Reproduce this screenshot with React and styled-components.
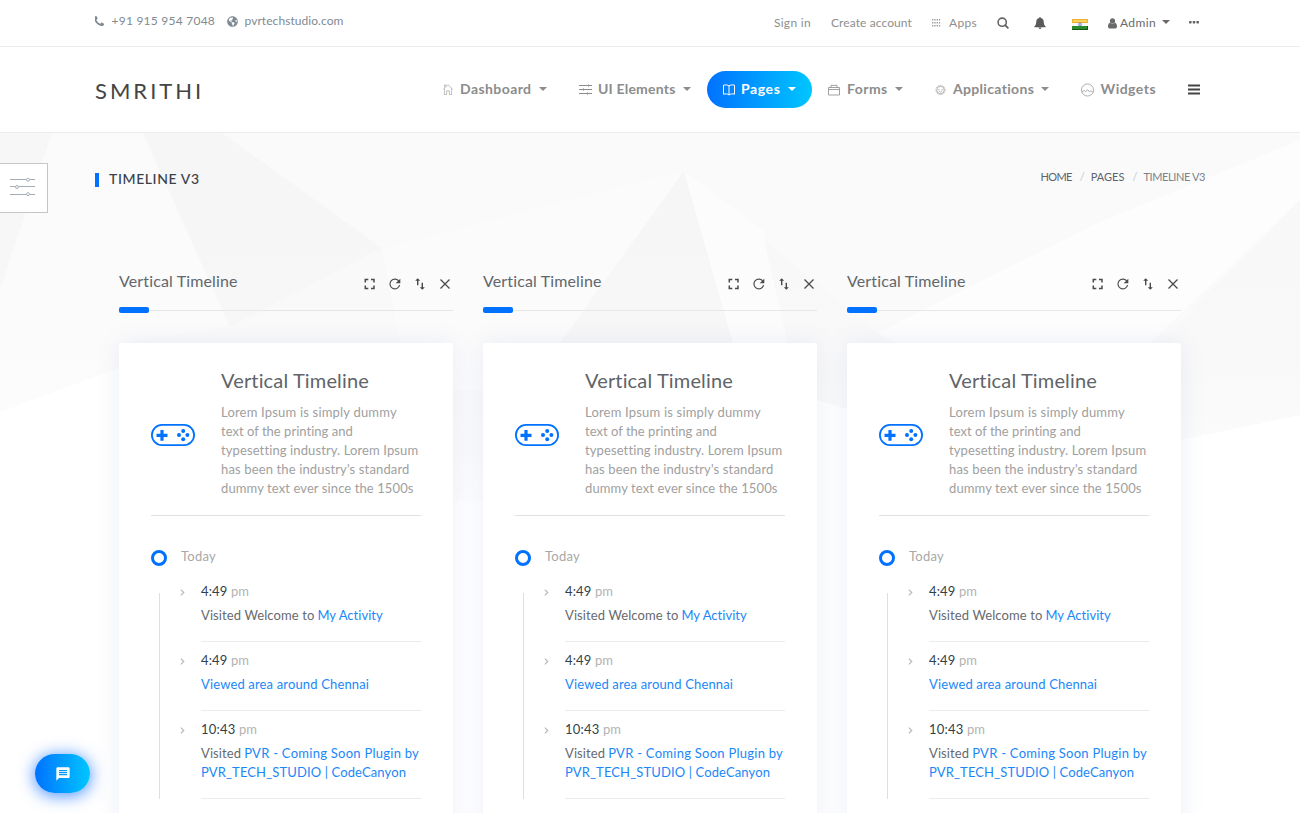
import React from 'react';
import styled, { createGlobalStyle } from 'styled-components';
import { FaGlobeAmericas } from 'react-icons/fa';
import { MdMessage } from 'react-icons/md';

const GlobalStyle = createGlobalStyle`
  * { box-sizing: border-box; }
  html, body { margin: 0; padding: 0; }
  body {
    height: 813px;
    overflow: hidden;
    background: #fff;
    color: #555;
    font-family: Lato, "Open Sans", sans-serif;
    font-size: 13px;
  }
  svg { display: block; flex: none; }
`;

const Page = styled.div`
  position: relative;
  height: 813px;
  overflow: hidden;
`;

const Container = styled.div`
  width: 1110px;
  height: 100%;
  margin: 0 auto;
  display: flex;
  justify-content: space-between;
`;

const Label = styled.span`
  padding-bottom: 2px;
  letter-spacing: ${(p) => p.$track || 0}px;
  white-space: nowrap;
`;

/* ---------- top bar ---------- */

const TopBar = styled.div`
  height: 47px;
  background: #fff;
  border-bottom: 1px solid #ececec;
  font-size: 12px;
`;

const Contacts = styled.div`
  display: flex;
  align-items: center;
  gap: 12px;
  height: 42px;
  color: #7f8a92;
`;

const Contact = styled.div`
  display: flex;
  align-items: center;
  gap: 6.5px;
`;

const TopLinks = styled.div`
  display: flex;
  align-items: center;
  gap: 20px;
  height: 46px;
  padding-right: 6px;
`;

const TopLink = styled.a`
  display: flex;
  align-items: center;
  gap: ${(p) => p.$gap || 0}px;
  color: ${(p) => (p.$strong ? '#6a6a6a' : '#8e8e8e')};
`;

const BellSlot = styled.span`
  display: flex;
  justify-content: center;
  width: 23px;
  color: #5a5a5a;
`;

const AccountCaret = styled.span`
  margin: -3px 0 0 3px;
`;

const MoreSlot = styled.span`
  margin: -2px 0 0 -1px;
`;

/* ---------- main navigation ---------- */

const NavBar = styled.div`
  height: 86px;
  background: #fff;
  border-bottom: 1px solid #ececec;
`;

const Brand = styled.div`
  display: flex;
  align-items: center;
  height: 87px;
  color: #444;
  font-size: 22px;
  letter-spacing: 3px;
`;

const Menu = styled.nav`
  display: flex;
  align-items: center;
  height: 85px;
  padding-right: 5px;
`;

const MenuItem = styled.a`
  display: flex;
  align-items: center;
  width: ${(p) => p.$width}px;
  height: 37px;
  padding: 0 16px;
  border-radius: 19px;
  font-size: 14px;
  font-weight: 700;
  color: ${(p) => (p.$active ? '#fff' : '#8c8c8c')};
  background: ${(p) => (p.$active ? 'linear-gradient(90deg, #0072ff, #00c6ff)' : 'none')};
`;

const MenuIcon = styled.span`
  width: ${(p) => p.$slot}px;
`;

const CaretSlot = styled.span`
  margin: -2px 0 0 auto;
`;

const MenuToggle = styled.span`
  padding-left: 16px;
  color: #444;
`;

/* ---------- page head ---------- */

const Backdrop = styled.svg`
  position: absolute;
  left: 0;
  top: 133px;
`;

const Content = styled.main`
  position: relative;
`;

const PageHead = styled.header`
  height: 92px;
`;

const Title = styled.h1`
  display: flex;
  align-items: center;
  gap: 10px;
  height: 93px;
  margin: 0;
  font-size: 14px;
  font-weight: 500;
  color: #3a4149;
  &::before {
    content: '';
    width: 4px;
    height: 14px;
    margin-top: 1px;
    background: #0072ff;
  }
`;

const Breadcrumb = styled.div`
  display: flex;
  align-items: center;
  gap: 8px;
  height: 89px;
  font-size: 11px;
  color: #5a6470;
`;

const Slash = styled.span`
  width: 3px;
  padding-bottom: 2px;
  color: #c4c9cf;
`;

const Current = styled.span`
  padding-bottom: 2px;
  color: #7b8389;
`;

/* ---------- widgets ---------- */

const Columns = styled.div`
  display: grid;
  grid-template-columns: repeat(3, 334px);
  gap: 30px;
  width: 1062px;
  margin: 40px auto 0;
`;

const WidgetHead = styled.div`
  display: flex;
  justify-content: space-between;
  height: 46px;
  border-bottom: 1px solid #e7e7e7;
`;

const WidgetTitle = styled.h2`
  margin: 0;
  font-size: 16px;
  font-weight: 400;
  line-height: 32px;
  color: #62676b;
`;

const Tools = styled.div`
  display: flex;
  align-items: center;
  gap: 9px;
  height: 38px;
  color: #4a4a4a;
`;

const Accent = styled.div`
  width: 30px;
  height: 6px;
  margin: -4px 0 30px;
  border-radius: 2px;
  background: #0072ff;
`;

const Card = styled.section`
  height: 520px;
  padding: 0 32px;
  border-radius: 3px;
  background: #fff;
  box-shadow: 0 0 25px rgba(90, 110, 200, 0.11);
`;

const Intro = styled.div`
  display: flex;
  align-items: center;
  gap: 26px;
  height: 173px;
  padding-top: 11px;
  border-bottom: 1px solid #e0e0e0;
`;

const IntroText = styled.div`
  height: 138px;
`;

const IntroTitle = styled.h3`
  margin: 0 0 9px;
  font-size: 20px;
  font-weight: 400;
  line-height: 28px;
  color: #606468;
`;

const Line = styled.div`
  line-height: 19px;
  color: #a0a0a0;
`;

const Day = styled.div`
  display: flex;
  align-items: center;
  gap: 14px;
  height: 57px;
  padding-top: 25px;
  color: #a8a8a8;
`;

const Ring = styled.span`
  width: 16px;
  height: 16px;
  margin-top: 2px;
  border: 3px solid #0072ff;
  border-radius: 50%;
`;

const Events = styled.div`
  position: relative;
  &::before {
    content: '';
    position: absolute;
    left: 8px;
    top: 20px;
    bottom: 0;
    width: 1px;
    background: #dedede;
  }
`;

const Event = styled.div`
  display: flex;
  gap: 15px;
  padding-left: 29px;
`;

const EventArrow = styled.span`
  padding-top: 16px;
  width: 6px;
`;

const EventBody = styled.div`
  width: 220px;
  padding: 8px 0 16px;
  border-bottom: 1px solid #ececec;
`;

const Time = styled.div`
  display: flex;
  gap: 3.5px;
  height: 20px;
  margin-bottom: 5px;
  line-height: 20px;
  color: #333f4d;
`;

const Period = styled.span`
  color: #b3b3b3;
`;

const EventLine = styled.div`
  display: flex;
  gap: 3px;
  height: 19px;
  line-height: 19px;
  color: #666a6e;
`;

const Link = styled.a`
  color: #1a87f8;
`;

/* ---------- floating controls ---------- */

const SettingsTab = styled.div`
  position: absolute;
  left: 0;
  top: 163px;
  display: flex;
  align-items: center;
  width: 48px;
  height: 50px;
  padding: 0 0 2px 10px;
  border: 1px solid #c6c6c6;
  border-left: 0;
  background: #fff;
`;

const ChatButton = styled.div`
  position: absolute;
  left: 35px;
  top: 754px;
  display: flex;
  align-items: center;
  justify-content: center;
  width: 55px;
  height: 39px;
  border-radius: 20px;
  color: #fff;
  background: linear-gradient(90deg, #0072ff, #00c6ff);
  box-shadow: 0 2px 16px 1px rgba(0, 102, 255, 0.68);
`;

/* ---------- icons ---------- */

const Caret = () => (
  <svg width="8" height="4" viewBox="0 0 8 4"><path d="M0 0h8L4 4z" fill="currentColor" /></svg>
);

const PhoneIcon = () => (
  <svg width="10" height="11" viewBox="128 128 1408 1536" fill="currentColor">
    <path d="M1408 1240q0 27-10 70.500t-21 68.500q-21 50-122 106-94 51-186 51-27 0-53-3.500t-57.500-12.500-47-14.500-55.500-20.500-49-18q-98-35-175-83-127-79-264-216t-216-264q-48-77-83-175-3-9-18-49t-20.500-55.500-14.500-47-12.500-57.500-3.500-53q0-92 51-186 56-101 106-122 25-11 68.500-21t70.500-10q14 0 21 3 18 6 53 76 11 19 30 54t35 63.500 31 53.500q3 4 17.500 25t21.500 35.500 7 28.500q0 20-28.500 50t-62 55-62 53-28.500 46q0 9 5 22.500t8.500 20.500 14 24 11.500 19q76 137 174 235t235 174q2 1 19 11.500t24 14 20.500 8.500 22.500 5q18 0 46-28.500t53-62 55-62 50-28.500q14 0 28.500 7t35.500 21.500 25 17.500q25 15 53.500 31t63.500 35 54 30q70 35 76 53 3 7 3 21z" />
  </svg>
);

const AppsIcon = () => (
  <svg width="9" height="9" viewBox="0 0 9 9" fill="#999">
    {[0, 2.300, 4.600, 6.900].map((x) => [0, 3, 6].map((y) => (
      <rect key={`${x}-${y}`} x={x} y={y} width="1.300" height="1.500" />
    )))}
  </svg>
);

const SearchIcon = () => (
  <svg width="12" height="12" viewBox="0 0 12 12" fill="none" stroke="#666" strokeWidth="1.600">
    <circle cx="5.200" cy="5.200" r="4.100" />
    <path d="M8.200 8.200l2.600 2.600" strokeWidth="1.900" strokeLinecap="round" />
  </svg>
);

const BellIcon = () => (
  <svg width="12" height="12" viewBox="0 0 12 12" fill="currentColor">
    <path d="M6 0c.5 0 .8.3.8.9 1.900.4 2.900 1.900 2.900 3.700 0 2.400.6 3.800 1.900 4.900v.7H.4v-.7c1.300-1.100 1.900-2.500 1.900-4.900C2.300 2.800 3.300 1.300 5.200.9 5.200.3 5.500 0 6 0z" />
    <path d="M4.500 10.600h3a1.500 1.400 0 0 1-3 0z" />
  </svg>
);

const FlagIcon = () => (
  <svg width="16" height="13" viewBox="0 -2 16 13">
    <rect width="16" height="11" fill="#f7f7f4" />
    <rect width="16" height="4" fill="#eeb02c" />
    <rect x="1" y="1" width="14" height="2" fill="#fad35c" />
    <rect y="7" width="16" height="4" fill="#2b8a2b" />
    <path d="M0 10.500h16M15.500 7v4" stroke="#11580f" />
    <circle cx="8" cy="5.300" r="1.500" fill="#b7c4ee" stroke="#6f86cf" strokeWidth=".8" />
  </svg>
);

const UserIcon = () => (
  <svg width="9" height="11" viewBox="0 0 9 11" fill="currentColor">
    <circle cx="4.500" cy="2.900" r="2.600" />
    <path d="M2 4.800C.5 5.300 0 6.800 0 8.600 0 9.800.7 10.500 1.700 10.500h5.600c1 0 1.700-.7 1.700-1.900 0-1.800-.5-3.300-2-3.800-1.400 1.300-3.600 1.300-5 0z" />
  </svg>
);

const DotsIcon = () => (
  <svg width="10" height="3" viewBox="0 0 10 3" fill="#666">
    <rect width="2.600" height="2.400" rx=".6" /><rect x="3.700" width="2.600" height="2.400" rx=".6" /><rect x="7.400" width="2.600" height="2.400" rx=".6" />
  </svg>
);

const thin = { fill: 'none', stroke: 'currentColor', strokeWidth: 0.8 };

const HomeIcon = () => (
  <svg width="10" height="11" viewBox="0 0 11 12" {...thin} strokeWidth=".6">
    <path d="M.4 5.500L5.500.8l5.100 4.700M1.500 4.700v6.800h2.500V7.500h3v4h2.500V4.700M1.800 3.800V1h1.400v1.500" />
  </svg>
);

const SlidersIcon = () => (
  <svg width="13" height="11" viewBox="0 0 13 11" {...thin} strokeWidth="1">
    <path d="M0 1.500h13M0 5.500h13M0 9.500h13" />
    <path d="M9.500 .3v2.400M4.500 4.300v2.400M8.500 8.300v2.400" strokeWidth=".8" />
  </svg>
);

const BookIcon = () => (
  <svg width="12" height="12" viewBox="0 0 12 12" {...thin} strokeWidth="1">
    <path d="M6 2C4.800.8 2.500.6.500 1.200v9c2-.6 4.300-.4 5.500.8 1.200-1.200 3.500-1.400 5.500-.8v-9C9.500.6 7.200.8 6 2zv9" />
  </svg>
);

const CaseIcon = () => (
  <svg width="12" height="12" viewBox="0 0 12 12" {...thin}>
    <path d="M.5 3.500h11v7.500H.5zM.5 5.500h11M3 3.500V1.400h6v2.100" />
  </svg>
);

const GearIcon = () => (
  <svg width="11" height="12" viewBox="0 0 12 12" {...thin}>
    <circle cx="6" cy="6" r="5" strokeWidth="1" strokeDasharray="1.500 1" opacity=".65" />
    <circle cx="6" cy="6" r="4.100" strokeWidth=".7" />
    <path d="M3.300 5.800h1.700M7 5.800h1.700M4.600 7.500c.9.700 1.900.7 2.800 0" strokeWidth=".7" />
  </svg>
);

const WaveIcon = () => (
  <svg width="13" height="14" viewBox="0 0 14 14" {...thin} strokeWidth=".75">
    <circle cx="7" cy="7" r="6.500" />
    <path d="M1 9.300l2.300-1.800L5 8.800l2-2.300 2.300 2.600 1.300-1.200L13 9.300" />
  </svg>
);

const BarsIcon = () => (
  <svg width="12" height="11" viewBox="0 0 12 11"><path d="M0 1.500h12M0 5.500h12M0 9.500h12" stroke="currentColor" strokeWidth="2" /></svg>
);

const TuneIcon = () => (
  <svg width="25" height="18" viewBox="0 0 25 18" fill="none" stroke="#a3adb7" strokeWidth="1">
    <path d="M0 1.500h16M20 1.500h5M0 8.500h5M9 8.500h16M0 16.500h16M20 16.500h5" />
    <circle cx="18" cy="1.700" r="1.500" /><circle cx="7" cy="9" r="1.500" /><circle cx="18" cy="16.200" r="1.500" />
  </svg>
);

const FullscreenIcon = () => (
  <svg width="16" height="16" viewBox="0 0 16 16" fill="none" stroke="currentColor" strokeWidth="1.500">
    <path d="M3.300 6.500V3.500h3M9 3.500h3v3M12 9.500v3H9M6.300 12.500h-3v-3" />
  </svg>
);

const RefreshIcon = () => (
  <svg width="16" height="16" viewBox="0 0 16 16">
    <path d="M12 5.400A4.900 4.900 0 1 0 12.600 9.200" fill="none" stroke="currentColor" strokeWidth="1.200" />
    <path d="M13.300 2.700v4.600H8.700z" fill="currentColor" />
  </svg>
);

const SortIcon = () => (
  <svg width="16" height="16" viewBox="0 0 16 16">
    <path d="M5.700 9.200V3.500M10.300 6.800v5.700" fill="none" stroke="currentColor" strokeWidth="1.400" />
    <path d="M3.200 4.700L5.700 2.200l2.500 2.500zM7.800 11.300l2.500 2.500 2.500-2.500z" fill="currentColor" />
  </svg>
);

const CloseIcon = () => (
  <svg width="16" height="16" viewBox="0 0 16 16">
    <path d="M3.500 3.500l9 9M12.500 3.500l-9 9" stroke="currentColor" strokeWidth="1.300" />
  </svg>
);

const GamepadIcon = () => (
  <svg width="44" height="22" viewBox="0 0 44 22" fill="#0072ff">
    <rect x=".9" y=".9" width="42.200" height="20.200" rx="10.100" fill="none" stroke="#0072ff" strokeWidth="1.800" />
    <path d="M9.400 6h3.200v3.800h3.900v3.200h-3.900v3.800H9.400V13H5.500V9.800h3.900z" />
    <circle cx="32.200" cy="6.900" r="2" /><circle cx="32.200" cy="15.300" r="2" /><circle cx="28" cy="11.100" r="2" /><circle cx="36.400" cy="11.100" r="2" />
  </svg>
);

const ArrowIcon = () => (
  <svg width="6" height="7" viewBox="0 0 6 7"><path d="M.8 .7L3.800 3.500.8 6.300" fill="none" stroke="#b5b5b5" strokeWidth="1.100" /></svg>
);

const Facets = () => (
  <Backdrop width="1300" height="400" viewBox="0 133 1300 400">
    <defs>
      <linearGradient id="fade" x1="0" y1="0" x2="0" y2="1">
        <stop offset="0" stopColor="#fff" stopOpacity="0" />
        <stop offset=".55" stopColor="#fff" stopOpacity=".1" />
        <stop offset="1" stopColor="#fff" stopOpacity=".8" />
      </linearGradient>
    </defs>
    <path d="M0 133h1300v282L1181 440 817 500H450L453 360 0 412z" fill="#fafafa" />
    <path d="M0 133h52L0 290z" fill="#f7f7f7" />
    <path d="M52 133h91l87 194L0 412V290z" fill="#fbfbfb" />
    <path d="M143 133h79l160 115-152 79z" fill="#f6f6f6" />
    <path d="M382 248L684 171 560 343 453 470 400 343z" fill="#fbfbfb" />
    <path d="M382 248L400 343H119L230 327z" fill="#f9f9f9" />
    <path d="M684 171L733 343H560z" fill="#f6f6f6" />
    <path d="M684 171l80 60 24 112h-55z" fill="#fcfcfc" />
    <path d="M764 240l113 93 11 10v77H788v-77z" fill="#f8f8f8" />
    <path d="M1300 140L1100 222 877 333l20 10h253L1300 200z" fill="#fdfdfd" />
    <path d="M1300 200L1175 328l-25 22v97l150-32z" fill="#f8f8f8" />
    <path d="M453 390h30v80l-30 34z" fill="#f8f8f8" />
    <path d="M0 412L119 368v165H0zM1300 415l-119 25v93h119zM817 400l30 9v120h-30z" fill="#fff" />
    <rect y="133" width="1300" height="400" fill="url(#fade)" />
  </Backdrop>
);

/* ---------- data ---------- */

const menu = [
  { label: 'Dashboard', width: 136, slot: 17, track: 0.42, icon: HomeIcon, caret: true },
  { label: 'UI Elements', width: 144, slot: 19, track: 0.2, icon: SlidersIcon, caret: true },
  { label: 'Pages', width: 105, slot: 18, track: 0.6, icon: BookIcon, caret: true, active: true },
  { label: 'Forms', width: 107, slot: 19, track: 0.46, icon: CaseIcon, caret: true },
  { label: 'Applications', width: 146, slot: 18, track: 0.32, icon: GearIcon, caret: true },
  { label: 'Widgets', width: 107, slot: 20, track: 0.47, icon: WaveIcon },
];

const intro = [
  ['Lorem Ipsum is simply dummy', 0.19],
  ['text of the printing and', 0.02],
  ['typesetting industry. Lorem Ipsum', 0.11],
  ["has been the industry's standard", 0.14],
  ['dummy text ever since the 1500s', 0.1],
];

const events = [
  { time: '4:49', track: 0.14, lines: [{ text: 'Visited Welcome to', link: 'My Activity', track: 0.03 }] },
  { time: '4:49', track: 0.14, lines: [{ link: 'Viewed area around Chennai', track: 0.15 }] },
  {
    time: '10:43',
    track: 0.21,
    lines: [
      { text: 'Visited', link: 'PVR - Coming Soon Plugin by', track: 0.26 },
      { link: 'PVR_TECH_STUDIO | CodeCanyon', track: 0.12 },
    ],
  },
];

const TimelineWidget = () => (
  <div>
    <WidgetHead>
      <WidgetTitle><Label $track={0.13}>Vertical Timeline</Label></WidgetTitle>
      <Tools>
        <FullscreenIcon />
        <RefreshIcon />
        <SortIcon />
        <CloseIcon />
      </Tools>
    </WidgetHead>
    <Accent />
    <Card>
      <Intro>
        <GamepadIcon />
        <IntroText>
          <IntroTitle><Label $track={0.15}>Vertical Timeline</Label></IntroTitle>
          {intro.map(([text, track]) => (
            <Line key={text}><Label $track={track}>{text}</Label></Line>
          ))}
        </IntroText>
      </Intro>
      <Day><Ring /><Label $track={0.25}>Today</Label></Day>
      <Events>
        {events.map((event, i) => (
          <Event key={i}>
            <EventArrow><ArrowIcon /></EventArrow>
            <EventBody>
              <Time><Label $track={event.track}>{event.time}</Label><Period>pm</Period></Time>
              {event.lines.map((line) => (
                <EventLine key={line.link}>
                  {line.text && <Label $track={0.1}>{line.text}</Label>}
                  <Link><Label $track={line.track}>{line.link}</Label></Link>
                </EventLine>
              ))}
            </EventBody>
          </Event>
        ))}
      </Events>
    </Card>
  </div>
);

export default function App() {
  return (
    <Page>
      <GlobalStyle />
      <Facets />
      <TopBar>
        <Container>
          <Contacts>
            <Contact><PhoneIcon /><Label $track={0.24}>+91 915 954 7048</Label></Contact>
            <Contact><FaGlobeAmericas size={11} /><Label $track={0.06}>pvrtechstudio.com</Label></Contact>
          </Contacts>
          <TopLinks>
            <TopLink><Label $track={0.3}>Sign in</Label></TopLink>
            <TopLink><Label $track={0.1}>Create account</Label></TopLink>
            <TopLink $gap={8}><AppsIcon /><Label $track={0.31}>Apps</Label></TopLink>
            <SearchIcon />
            <BellSlot><BellIcon /></BellSlot>
            <FlagIcon />
            <TopLink $gap={3} $strong>
              <UserIcon />
              <Label $track={0.37}>Admin</Label>
              <AccountCaret><Caret /></AccountCaret>
            </TopLink>
            <MoreSlot><DotsIcon /></MoreSlot>
          </TopLinks>
        </Container>
      </TopBar>
      <NavBar>
        <Container>
          <Brand>SMRITHI</Brand>
          <Menu>
            {menu.map(({ label, width, slot, track, icon: Icon, caret, active }) => (
              <MenuItem key={label} $width={width} $active={active}>
                <MenuIcon $slot={slot}><Icon /></MenuIcon>
                <Label $track={track}>{label}</Label>
                {caret && <CaretSlot><Caret /></CaretSlot>}
              </MenuItem>
            ))}
            <MenuToggle><BarsIcon /></MenuToggle>
          </Menu>
        </Container>
      </NavBar>
      <Content>
        <PageHead>
          <Container>
            <Title><Label $track={0.6}>TIMELINE V3</Label></Title>
            <Breadcrumb>
              <Label $track={-0.6}>HOME</Label>
              <Slash>/</Slash>
              <Label>PAGES</Label>
              <Slash>/</Slash>
              <Current><Label $track={-0.39}>TIMELINE V3</Label></Current>
            </Breadcrumb>
          </Container>
        </PageHead>
        <Columns>
          <TimelineWidget />
          <TimelineWidget />
          <TimelineWidget />
        </Columns>
      </Content>
      <SettingsTab><TuneIcon /></SettingsTab>
      <ChatButton><MdMessage size={16} /></ChatButton>
    </Page>
  );
}
